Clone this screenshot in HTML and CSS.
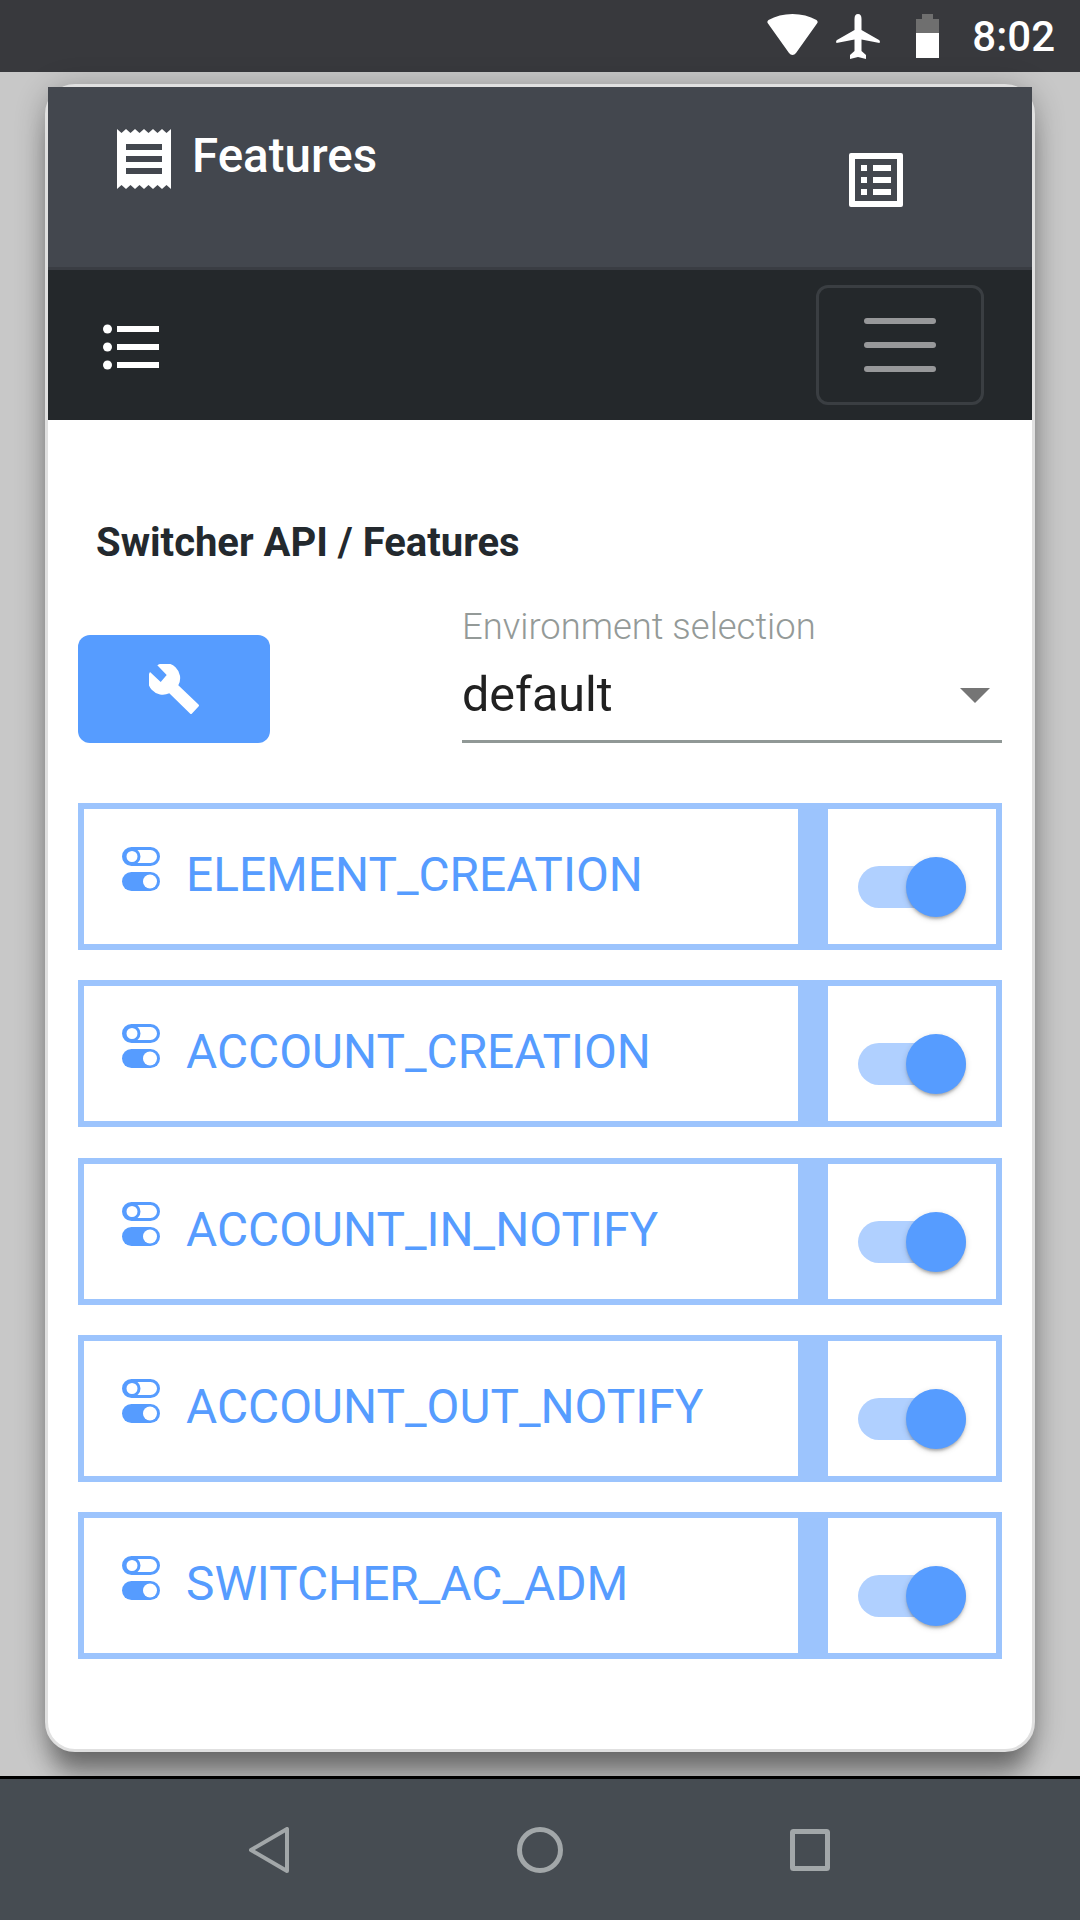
FILE: index.html
```html
<!DOCTYPE html>
<html lang="en">
<head>
	<meta charset="UTF-8">
	<title>Features</title>
	<link rel="stylesheet" href="styles.css">
</head>
<body>
	<div class="status">
		<svg class="ic-wifi" viewBox="0 0 51 41"><path d="M25.500 41 Q23.500 41 22 39 L1 9.500 Q-0.500 7.500 1.500 6 Q12 0 25.500 0 Q39 0 49.500 6 Q51.500 7.500 50 9.500 L29 39 Q27.500 41 25.500 41Z" fill="#fff"/></svg>
		<svg class="ic-plane" viewBox="0 0 44 45"><path d="M22 0 Q25.500 0 25.500 5 V16 L43 26 Q44.500 27 43.500 29 L25.500 25.500 V37 L30 41 V45 L22 43 L14 45 V41 L18.500 37 V25.500 L0.500 29 Q-0.500 27 1 26 L18.500 16 V5 Q18.500 0 22 0Z" fill="#fff"/></svg>
		<div class="battery"><i></i><b></b><u></u></div>
		<span class="clock">8:02</span>
	</div>

	<div class="main">
		<div class="card">
			<div class="head">
				<div class="brand">
					<svg class="ic-receipt" viewBox="0 0 54 60"><path d="M0 0 L4.500 4 L9 0 L13.500 4 L18 0 L22.500 4 L27 0 L31.500 4 L36 0 L40.500 4 L45 0 L49.500 4 L54 0 L54 60 L49.500 56 L45 60 L40.500 56 L36 60 L31.500 56 L27 60 L22.500 56 L18 60 L13.500 56 L9 60 L4.500 56 L0 60Z" fill="#fff"/><path d="M9 15h36v6H9zM9 27h36v6H9zM9 39h36v6H9z" fill="#43474e"/></svg>
					<span>Features</span>
				</div>
				<svg class="ic-list" viewBox="0 0 54 54"><path fill-rule="evenodd" d="M2 0h50a2 2 0 0 1 2 2v50a2 2 0 0 1-2 2H2a2 2 0 0 1-2-2V2a2 2 0 0 1 2-2ZM6 6v42h42V6Z" fill="#fff"/><path d="M12 12h6v6h-6zM24 12h18v6H24zM12 24h6v6h-6zM24 24h18v6H24zM12 36h6v6h-6zM24 36h18v6H24z" fill="#fff"/></svg>
			</div>
			<div class="navbar">
				<svg class="ic-bullets" viewBox="0 0 56 46"><circle cx="4.500" cy="5" r="4.500"/><circle cx="4.500" cy="23" r="4.500"/><circle cx="4.500" cy="41" r="4.500"/><path d="M14 2h42v6H14zM14 20h42v6H14zM14 38h42v6H14z"/></svg>
				<div class="burger"><i></i><i></i><i></i></div>
			</div>

			<div class="content">
				<h2 class="title">Switcher API / Features</h2>
				<div class="tools">
					<div class="btn">
						<svg class="ic-wrench" viewBox="0 0 50 50"><path d="M8.300 1.300 A15 15 0 0 1 29.300 21.300 L49.500 40.500 Q50.500 41.500 49.500 42.500 L43 49.500 Q42 50.500 41 49.500 L20.300 29.300 A15 15 0 0 1 1 8 L11.700 18 L17.700 11Z" fill="#fff"/></svg>
					</div>
					<div class="select">
						<label>Environment selection</label>
						<div class="value"><span>default</span><i class="arrow"></i></div>
					</div>
				</div>

				<div class="row">
					<div class="name"><svg class="ic-toggle" viewBox="0 0 38 44"><rect x="1.500" y="1.500" width="35" height="16" rx="8" fill="none" stroke="#569cff" stroke-width="3"/><circle cx="10" cy="9.500" r="7" fill="#fff" stroke="#569cff" stroke-width="3"/><rect y="25" width="38" height="19" rx="9.500" fill="#569cff"/><circle cx="28" cy="34.500" r="7" fill="#fff"/></svg><span>ELEMENT_CREATION</span></div>
					<div class="cell"><div class="switch"><i></i></div></div>
				</div>
				<div class="row">
					<div class="name"><svg class="ic-toggle" viewBox="0 0 38 44"><rect x="1.500" y="1.500" width="35" height="16" rx="8" fill="none" stroke="#569cff" stroke-width="3"/><circle cx="10" cy="9.500" r="7" fill="#fff" stroke="#569cff" stroke-width="3"/><rect y="25" width="38" height="19" rx="9.500" fill="#569cff"/><circle cx="28" cy="34.500" r="7" fill="#fff"/></svg><span>ACCOUNT_CREATION</span></div>
					<div class="cell"><div class="switch"><i></i></div></div>
				</div>
				<div class="row">
					<div class="name"><svg class="ic-toggle" viewBox="0 0 38 44"><rect x="1.500" y="1.500" width="35" height="16" rx="8" fill="none" stroke="#569cff" stroke-width="3"/><circle cx="10" cy="9.500" r="7" fill="#fff" stroke="#569cff" stroke-width="3"/><rect y="25" width="38" height="19" rx="9.500" fill="#569cff"/><circle cx="28" cy="34.500" r="7" fill="#fff"/></svg><span>ACCOUNT_IN_NOTIFY</span></div>
					<div class="cell"><div class="switch"><i></i></div></div>
				</div>
				<div class="row">
					<div class="name"><svg class="ic-toggle" viewBox="0 0 38 44"><rect x="1.500" y="1.500" width="35" height="16" rx="8" fill="none" stroke="#569cff" stroke-width="3"/><circle cx="10" cy="9.500" r="7" fill="#fff" stroke="#569cff" stroke-width="3"/><rect y="25" width="38" height="19" rx="9.500" fill="#569cff"/><circle cx="28" cy="34.500" r="7" fill="#fff"/></svg><span>ACCOUNT_OUT_NOTIFY</span></div>
					<div class="cell"><div class="switch"><i></i></div></div>
				</div>
				<div class="row">
					<div class="name"><svg class="ic-toggle" viewBox="0 0 38 44"><rect x="1.500" y="1.500" width="35" height="16" rx="8" fill="none" stroke="#569cff" stroke-width="3"/><circle cx="10" cy="9.500" r="7" fill="#fff" stroke="#569cff" stroke-width="3"/><rect y="25" width="38" height="19" rx="9.500" fill="#569cff"/><circle cx="28" cy="34.500" r="7" fill="#fff"/></svg><span>SWITCHER_AC_ADM</span></div>
					<div class="cell"><div class="switch"><i></i></div></div>
				</div>
			</div>
		</div>
	</div>

	<div class="sysnav">
		<svg class="ic-back" viewBox="0 0 40 46"><path d="M38 2 L38 44 L2 23Z" fill="none" stroke="#a2a7a9" stroke-width="4" stroke-linejoin="round"/></svg>
		<svg class="ic-home" viewBox="0 0 46 46"><circle cx="23" cy="23" r="20.500" fill="none" stroke="#a2a7a9" stroke-width="5"/></svg>
		<svg class="ic-recent" viewBox="0 0 40 42"><rect x="2.500" y="2.500" width="35" height="37" rx="1" fill="none" stroke="#a2a7a9" stroke-width="5"/></svg>
	</div>
</body>
</html>
```

FILE: styles.css
```css
*{
	margin: 0;
	padding: 0;
	box-sizing: border-box;
}
body{
	width: 1080px;
	height: 1920px;
	display: flex;
	flex-direction: column;
	overflow: hidden;
	background-color: #c8c8c8;
	font-family: Roboto, "Liberation Sans", sans-serif;
}
svg{
	display: block;
	flex: none;
}

/* status bar */
.status{
	height: 72px;
	flex: none;
	display: flex;
	align-items: flex-start;
	background-color: #38393d;
	color: #fff;
	padding: 14px 25px 0 767px;
}
.ic-wifi{
	width: 51px;
	height: 41px;
}
.ic-plane{
	width: 44px;
	height: 45px;
	margin-left: 18px;
}
.battery{
	width: 25px;
	margin-left: 36px;
}
.battery i,
.battery b,
.battery u{
	display: block;
}
.battery i{
	width: 11px;
	height: 5px;
	margin: 0 auto;
	background-color: #6f6f6f;
}
.battery b{
	height: 14px;
	background-color: #6f6f6f;
}
.battery u{
	height: 25px;
	background-color: #fff;
}
.clock{
	margin-left: 33px;
	font-size: 42px;
	font-weight: 500;
	line-height: 46px;
}

/* grey page behind the card */
.main{
	flex: 1;
	display: flex;
	padding: 12px 45px 24px;
	background-color: #c8c8c8;
}
.card{
	flex: 1;
	display: flex;
	flex-direction: column;
	background-color: #fff;
	border: 3px solid #e0e0e0;
	border-radius: 30px;
	box-shadow: 0 4px 30px rgba(0,0,0,.3), 0 30px 24px -8px rgba(0,0,0,.35);
}
.head{
	height: 183px;
	flex: none;
	display: flex;
	justify-content: space-between;
	align-items: flex-start;
	background-color: #43474e;
	border-bottom: 3px solid #3a3d43;
	padding: 42px 129px 0 69px;
}
.brand{
	display: flex;
	align-items: flex-start;
	color: #fff;
	font-size: 47.5px;
	font-weight: 500;
	line-height: 54px;
}
.brand span{
	margin-left: 21px;
}
.ic-receipt{
	width: 54px;
	height: 60px;
}
.ic-list{
	width: 54px;
	height: 54px;
	margin-top: 24px;
}
.navbar{
	height: 150px;
	flex: none;
	display: flex;
	justify-content: space-between;
	align-items: center;
	background-color: #24282b;
	padding: 0 48px 0 55px;
}
.ic-bullets{
	width: 56px;
	height: 46px;
	margin-top: 3px;
	fill: #fff;
}
.burger{
	width: 168px;
	height: 120px;
	display: flex;
	flex-direction: column;
	align-items: center;
	justify-content: center;
	gap: 18px;
	border: 3px solid #3a3e42;
	border-radius: 12px;
}
.burger i{
	display: block;
	width: 72px;
	height: 6px;
	border-radius: 3px;
	background-color: #97989a;
}

/* page body */
.content{
	flex: 1;
	padding: 100px 30px 0;
}
.title{
	margin-left: 18px;
	font-size: 40px;
	font-weight: 700;
	line-height: 46px;
	color: #23292e;
}
.tools{
	display: flex;
	align-items: flex-end;
	margin-top: 40px;
	margin-bottom: 60px;
}
.btn{
	width: 192px;
	height: 108px;
	display: flex;
	align-items: center;
	justify-content: center;
	background-color: #569cff;
	border-radius: 12px;
}
.ic-wrench{
	width: 50px;
	height: 50px;
}
.select{
	width: 540px;
	margin-left: 192px;
	border-bottom: 3px solid #909896;
}
.select label{
	display: block;
	font-size: 36.4px;
	font-weight: 300;
	line-height: 42px;
	color: #949a98;
}
.value{
	display: flex;
	justify-content: space-between;
	align-items: center;
	padding: 19px 12px 17px 0;
	font-size: 48.5px;
	line-height: 56px;
	color: #212121;
}
.arrow{
	width: 0;
	height: 0;
	border-left: 15px solid transparent;
	border-right: 15px solid transparent;
	border-top: 15px solid #757575;
}

/* feature rows */
.row{
	height: 147px;
	display: flex;
	border: 6px solid #9cc4fd;
	margin-bottom: 30.25px;
}
.name{
	flex: 1;
	display: flex;
	align-items: flex-start;
	padding: 38px 0 0 38px;
	color: #569cff;
	font-size: 47.8px;
	font-weight: 400;
	line-height: 56px;
}
.ic-toggle{
	width: 38px;
	height: 44px;
}
.name span{
	margin-left: 26px;
}
.cell{
	width: 198px;
	flex: none;
	display: flex;
	align-items: center;
	border-left: 30px solid #9cc4fd;
	padding: 21px 0 0 30px;
}
.switch{
	width: 108px;
	height: 42px;
	position: relative;
	background-color: #b0d0ff;
	border-radius: 21px;
}
.switch i{
	position: absolute;
	top: -9px;
	right: 0;
	width: 60px;
	height: 60px;
	border-radius: 50%;
	background-color: #569cff;
	box-shadow: 0 3px 3px -1px rgba(0,0,0,.25), 0 2px 6px rgba(0,0,0,.14);
}

/* android nav */
.sysnav{
	height: 144px;
	flex: none;
	display: flex;
	align-items: center;
	background-color: #464c52;
	border-top: 3px solid #000;
	padding-left: 249px;
}
.ic-back{
	width: 40px;
	height: 46px;
}
.ic-home{
	width: 46px;
	height: 46px;
	margin-left: 228px;
}
.ic-recent{
	width: 40px;
	height: 42px;
	margin-left: 227px;
}
```
